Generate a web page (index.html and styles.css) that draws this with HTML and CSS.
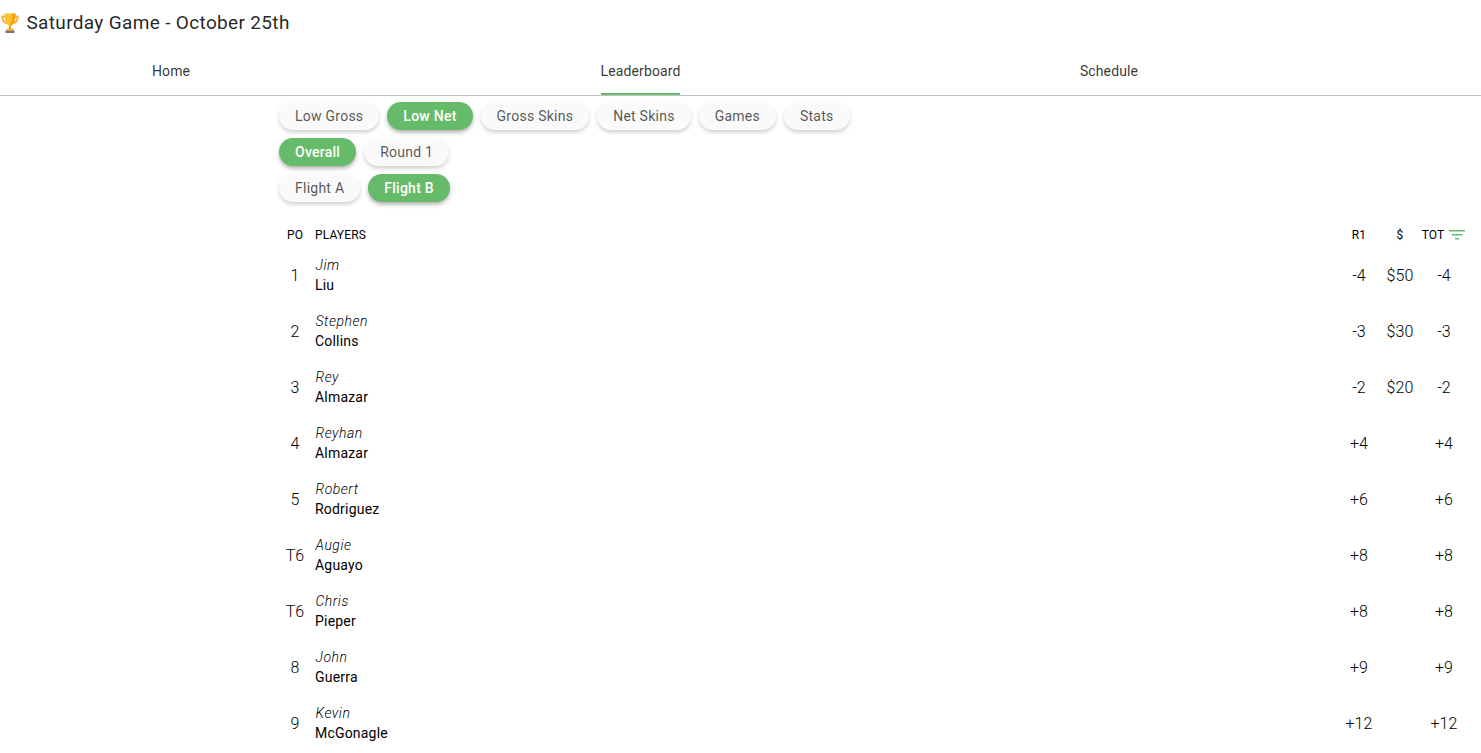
FILE: index.html
```html
<!DOCTYPE html>
<html>
<head>
<meta charset="utf-8">
<title>Saturday Game - October 25th</title>
<link rel="stylesheet" href="styles.css">
</head>
<body>
<header class="title-bar">
  <svg class="trophy" viewBox="0 0 22 22" width="22" height="22">
    <path d="M3 3.500h4v2H4.500c.2 3 1.500 4.500 3.500 5.300l-.6 1.500C4 11.300 2.400 8.500 2.300 4.500 2.300 3.900 2.500 3.500 3 3.500zM19 3.500h-4v2h2.500c-.2 3-1.500 4.500-3.500 5.300l.6 1.500c3.400-1 5-3.800 5.100-7.800 0-.6-.2-1-.7-1z" fill="#f5b335"/>
    <path d="M5.500 1.500h11c0 6-1 10.500-4.300 12h-2.400C6.500 12 5.500 7.500 5.500 1.500z" fill="#fbc02d"/>
    <path d="M13 1.500h3.500c0 6-1 10.500-4.300 12H11c1.500-2.500 2-7 2-12z" fill="#f0a30a"/>
    <rect x="10" y="13.500" width="2" height="3.500" fill="#e09a10"/>
    <rect x="7.500" y="16.500" width="7" height="2" fill="#f2b134"/>
    <rect x="6.500" y="18.500" width="9" height="2.500" fill="#8d6e63"/>
  </svg>
  <h1 class="title">Saturday Game - October 25th</h1>
</header>
<nav class="tabs">
  <a class="tab"><span class="tab-label">Home</span></a>
  <a class="tab tab-active"><span class="tab-label">Leaderboard</span></a>
  <a class="tab"><span class="tab-label">Schedule</span></a>
</nav>
<main class="content">
  <div class="chips">
    <button class="chip">Low Gross</button>
    <button class="chip chip-on">Low Net</button>
    <button class="chip">Gross Skins</button>
    <button class="chip">Net Skins</button>
    <button class="chip">Games</button>
    <button class="chip">Stats</button>
  </div>
  <div class="chips">
    <button class="chip chip-on">Overall</button>
    <button class="chip">Round 1</button>
  </div>
  <div class="chips">
    <button class="chip">Flight A</button>
    <button class="chip chip-on">Flight B</button>
  </div>
  <table class="board">
    <thead>
      <tr>
        <th class="c-pos">PO</th>
        <th class="c-name">PLAYERS</th>
        <th class="c-r1">R1</th>
        <th class="c-money">$</th>
        <th class="c-tot"><span class="tot-wrap">TOT<svg class="sort" viewBox="0 0 16 12" width="16" height="12"><path d="M0 1h16v1.500H0zM2.700 5h10.600v1.500H2.700zM6 9h4v1.500H6z" fill="#66bb6a"/></svg></span></th>
      </tr>
    </thead>
    <tbody>
      <tr><td class="c-pos">1</td><td class="c-name"><i>Jim</i><b>Liu</b></td><td class="c-r1">-4</td><td class="c-money">$50</td><td class="c-tot">-4</td></tr>
      <tr><td class="c-pos">2</td><td class="c-name"><i>Stephen</i><b>Collins</b></td><td class="c-r1">-3</td><td class="c-money">$30</td><td class="c-tot">-3</td></tr>
      <tr><td class="c-pos">3</td><td class="c-name"><i>Rey</i><b>Almazar</b></td><td class="c-r1">-2</td><td class="c-money">$20</td><td class="c-tot">-2</td></tr>
      <tr><td class="c-pos">4</td><td class="c-name"><i>Reyhan</i><b>Almazar</b></td><td class="c-r1">+4</td><td class="c-money"></td><td class="c-tot">+4</td></tr>
      <tr><td class="c-pos">5</td><td class="c-name"><i>Robert</i><b>Rodriguez</b></td><td class="c-r1">+6</td><td class="c-money"></td><td class="c-tot">+6</td></tr>
      <tr><td class="c-pos">T6</td><td class="c-name"><i>Augie</i><b>Aguayo</b></td><td class="c-r1">+8</td><td class="c-money"></td><td class="c-tot">+8</td></tr>
      <tr><td class="c-pos">T6</td><td class="c-name"><i>Chris</i><b>Pieper</b></td><td class="c-r1">+8</td><td class="c-money"></td><td class="c-tot">+8</td></tr>
      <tr><td class="c-pos">8</td><td class="c-name"><i>John</i><b>Guerra</b></td><td class="c-r1">+9</td><td class="c-money"></td><td class="c-tot">+9</td></tr>
      <tr><td class="c-pos">9</td><td class="c-name"><i>Kevin</i><b>McGonagle</b></td><td class="c-r1">+12</td><td class="c-money"></td><td class="c-tot">+12</td></tr>
    </tbody>
  </table>
</main>
</body>
</html>
```
FILE: styles.css
```css
* { box-sizing: border-box; }
html, body { height: 100%; }
body {
  margin: 0;
  height: 753px;
  overflow: hidden;
  background: #fff;
  font-family: Roboto, "Liberation Sans", sans-serif;
  color: rgba(0, 0, 0, 0.87);
}
.title-bar {
  display: flex;
  align-items: center;
  height: 46px;
  gap: 5.500px;
}
.trophy { flex: none; margin-left: -1px; }
.title {
  margin: 0;
  font-size: 19px;
  font-weight: 400;
  letter-spacing: 0.34px;
  line-height: 46px;
}
.tabs {
  display: grid;
  grid-template-columns: 342px 597px 340px;
  height: 50px;
  border-bottom: 1px solid #c4c4c4;
}
.tab {
  display: flex;
  justify-content: center;
  font-size: 14px;
  letter-spacing: 0.12px;
  color: rgba(0, 0, 0, 0.8);
}
.tab-label {
  display: block;
  height: 49px;
  line-height: 50px;
}
.tab-active .tab-label { border-bottom: 2px solid #66bb6a; }
.content {
  display: flex;
  flex-direction: column;
  padding: 6px 7px 0 279px;
}
.chips {
  display: flex;
  gap: 8px;
  height: 28px;
  margin-bottom: 8px;
}
.chip {
  height: 28px;
  padding: 0 16px;
  border: 0;
  border-radius: 14px;
  background: #fafafa;
  color: rgba(0, 0, 0, 0.68);
  font-family: Roboto, "Liberation Sans", sans-serif;
  font-size: 14px;
  letter-spacing: 0.25px;
  box-shadow: 0 3px 5px -1px rgba(0,0,0,.14), 0 2px 4px 0 rgba(0,0,0,.08);
}
.chip-on {
  background: #66bb6a;
  color: #fff;
  font-weight: 500;
  box-shadow: 0 3px 5px -1px rgba(0,0,0,.25), 0 2px 4px 0 rgba(0,0,0,.12);
}
.board {
  width: 100%;
  margin-top: 12px;
  border-collapse: collapse;
  table-layout: fixed;
}
.board th {
  height: 25px;
  padding: 0;
  font-size: 12px;
  font-weight: 400;
  letter-spacing: 0.15px;
  color: #000;
  vertical-align: middle;
}
.board td {
  height: 56px;
  padding: 0;
  font-size: 16px;
  font-weight: 300;
  letter-spacing: 0.1px;
  color: #000;
  vertical-align: middle;
}
.c-pos { width: 32px; text-align: center; }
.board .c-name { text-align: left; padding-left: 4px; }
.c-r1 { width: 54px; text-align: center; }
.c-money { width: 28px; text-align: center; white-space: nowrap; }
.c-tot { width: 60px; text-align: center; }
.c-name i {
  display: block;
  font-size: 14px;
  font-weight: 300;
  letter-spacing: 0.5px;
  line-height: 20px;
  padding-left: 0.5px;
}
.c-name b {
  display: block;
  font-size: 14px;
  font-weight: 400;
  letter-spacing: 0.2px;
  line-height: 20px;
  color: #000;
}
.tot-wrap { display: inline-flex; align-items: center; gap: 5px; margin-right: 1px; }
.sort { flex: none; }
```
